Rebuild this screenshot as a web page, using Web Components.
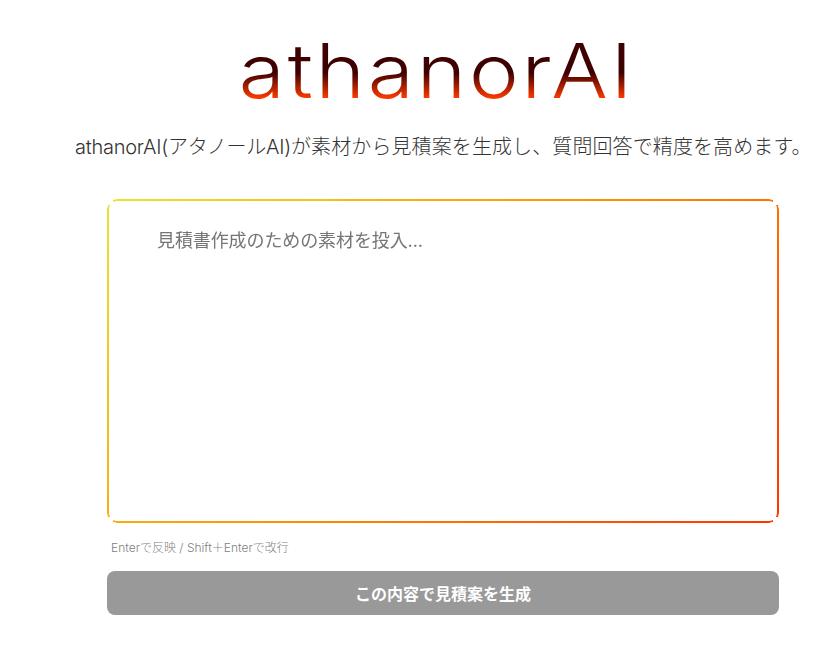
<!DOCTYPE html>
<html lang="ja">
<head>
<meta charset="utf-8">
<title>athanorAI</title>
<style>
    html, body { margin: 0; background: #fff; }
    body { font-family: "Inter", "Noto Sans CJK JP", sans-serif; overflow: hidden; }
</style>
</head>
<body>
<estimate-page>
    <brand-logo slot="logo">athanorAI</brand-logo>
    <span slot="lead"><span style="letter-spacing: -0.25px">athanorAI(アタノールAI)</span><span style="letter-spacing: 0.1px">が素材から見積案を生成し、質問回答で精度を高めます。</span></span>
    <gradient-input slot="input" placeholder="見積書作成のための素材を投入..."></gradient-input>
    <span slot="hint">Enterで反映 / Shift＋Enterで改行</span>
    <submit-button slot="button">この内容で見積案を生成</submit-button>
</estimate-page>

<script>
class EstimatePage extends HTMLElement {
    constructor() {
        super();
        const template = document.createElement('template');
        template.innerHTML = `
            <style>
                :host { display: block; width: 825px; height: 645px; }
                .wrap { display: flex; flex-direction: column; align-items: center; padding-top: 31px; }
                .lead {
                    align-self: stretch;
                    padding-left: 75px;
                    margin-top: 21px;
                    height: 30px;
                    line-height: 30px;
                    font-size: 20px;
                    font-weight: 300;
                    color: #333;
                    white-space: nowrap;
                }
                .form {
                    align-self: flex-start;
                    width: 672px;
                    margin: 37px 0 0 107px;
                    display: flex;
                    flex-direction: column;
                }
                .hint {
                    margin: 16px 0 14px 4px;
                    height: 18px;
                    line-height: 18px;
                    font-size: 12px;
                    font-weight: 300;
                    color: #7f7f7f;
                }
            </style>
            <div class="wrap">
                <slot name="logo"></slot>
                <div class="lead"><slot name="lead"></slot></div>
                <div class="form">
                    <slot name="input"></slot>
                    <div class="hint"><slot name="hint"></slot></div>
                    <slot name="button"></slot>
                </div>
            </div>
        `;
        this.attachShadow({ mode: 'open' });
        this.shadowRoot.appendChild(template.content.cloneNode(true));
    }
}

class BrandLogo extends HTMLElement {
    constructor() {
        super();
        const template = document.createElement('template');
        template.innerHTML = `
            <style>
                :host { display: block; margin-left: 49px; }
                .logo {
                    font-family: "Inter", sans-serif;
                    font-size: 75px;
                    font-weight: 360;
                    line-height: 80px;
                    letter-spacing: 2.5px;
                    /* the wordmark is rounder than Inter */
                    transform: scaleX(1.12);
                    background: linear-gradient(to bottom, #3e0000 0, #3e0000 52%, #ff3a00 84%, #ff3a00 100%);
                    -webkit-background-clip: text;
                    background-clip: text;
                    color: transparent;
                }
            </style>
            <div class="logo"><slot></slot></div>
        `;
        this.attachShadow({ mode: 'open' });
        this.shadowRoot.appendChild(template.content.cloneNode(true));
    }
}

class GradientInput extends HTMLElement {
    constructor() {
        super();
        const template = document.createElement('template');
        template.innerHTML = `
            <style>
                :host { display: block; }
                .frame {
                    height: 324px;
                    box-sizing: border-box;
                    padding: 2px;
                    border-radius: 10px;
                    background: linear-gradient(135deg, #e9e52b 0%, #ff9900 45%, #ff3300 100%);
                    /* corners of the ring are cut away, only the straight edges stay */
                    -webkit-mask:
                        linear-gradient(#000 0 0) 6px 0 / calc(100% - 12px) 100% no-repeat,
                        linear-gradient(#000 0 0) 0 6px / 100% calc(100% - 12px) no-repeat;
                    mask:
                        linear-gradient(#000 0 0) 6px 0 / calc(100% - 12px) 100% no-repeat,
                        linear-gradient(#000 0 0) 0 6px / 100% calc(100% - 12px) no-repeat;
                }
                .field {
                    height: 100%;
                    box-sizing: border-box;
                    background: #fff;
                    border-radius: 8px;
                    padding: 28px 48px;
                    font-size: 18px;
                    line-height: 24px;
                    letter-spacing: -0.1px;
                    color: #757575;
                }
            </style>
            <div class="frame"><div class="field"></div></div>
        `;
        this.attachShadow({ mode: 'open' });
        this.shadowRoot.appendChild(template.content.cloneNode(true));
    }

    connectedCallback() {
        this.shadowRoot.querySelector('.field').textContent = this.getAttribute('placeholder');
    }
}

class SubmitButton extends HTMLElement {
    constructor() {
        super();
        const template = document.createElement('template');
        template.innerHTML = `
            <style>
                :host { display: block; }
                button {
                    display: block;
                    width: 100%;
                    height: 44px;
                    padding: 0;
                    border: 0;
                    border-radius: 8px;
                    background: #999;
                    color: #fff;
                    font: 700 16px "Inter", "Noto Sans CJK JP", sans-serif;
                }
            </style>
            <button type="button" disabled><slot></slot></button>
        `;
        this.attachShadow({ mode: 'open' });
        this.shadowRoot.appendChild(template.content.cloneNode(true));
    }
}

customElements.define('estimate-page', EstimatePage);
customElements.define('brand-logo', BrandLogo);
customElements.define('gradient-input', GradientInput);
customElements.define('submit-button', SubmitButton);
</script>
</body>
</html>
